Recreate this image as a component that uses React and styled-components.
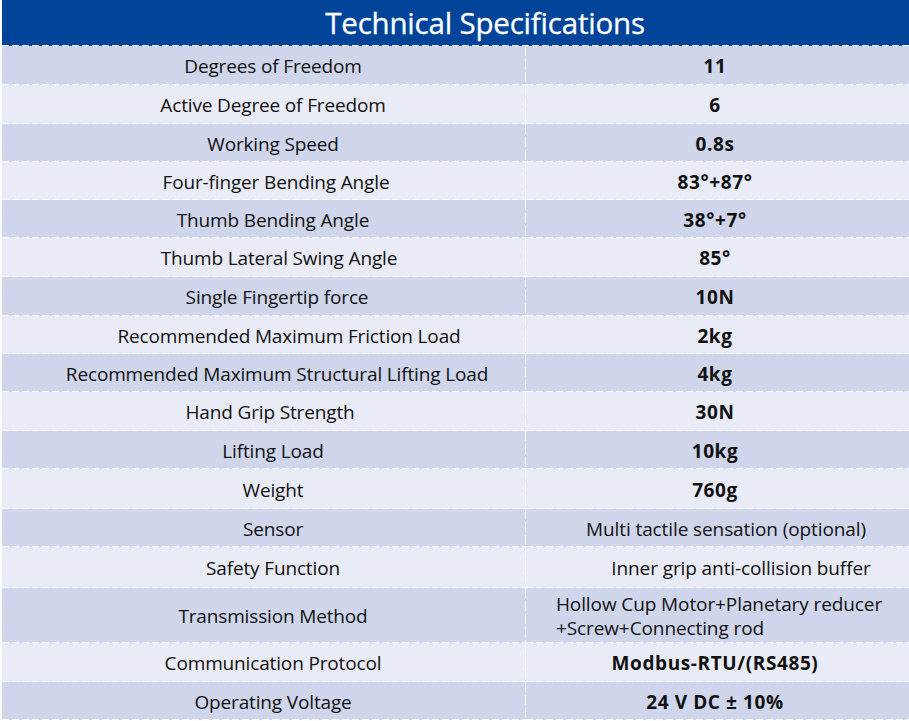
import React from 'react'
import styled, { createGlobalStyle } from 'styled-components'

const GlobalStyle = createGlobalStyle`
  html, body {
    margin: 0;
    padding: 0;
    background: #ffffff;
  }
  body {
    font-family: "Open Sans", "Noto Sans", sans-serif;
    color: #111111;
  }
`

// shift / labelShift = left padding; the source sheet isn't perfectly centred
const specs = [
  { label: 'Degrees of Freedom', value: '11', h: 39, bold: true },
  { label: 'Active Degree of Freedom', value: '6', h: 39, bold: true },
  { label: 'Working Speed', value: '0.8s', h: 38, bold: true },
  { label: 'Four-finger Bending Angle', value: '83°+87°', h: 38, bold: true, labelShift: 24 },
  { label: 'Thumb Bending Angle', value: '38°+7°', h: 38, bold: true },
  { label: 'Thumb Lateral Swing Angle', value: '85°', h: 39, bold: true, labelShift: 30 },
  { label: 'Single Fingertip force', value: '10N', h: 39, bold: true, labelShift: 26 },
  { label: 'Recommended Maximum Friction Load', value: '2kg', h: 38, bold: true, labelShift: 50 },
  { label: 'Recommended Maximum Structural Lifting Load', value: '4kg', h: 38, bold: true, labelShift: 26 },
  { label: 'Hand Grip Strength', value: '30N', h: 39, bold: true, labelShift: 12 },
  { label: 'Lifting Load', value: '10kg', h: 38, bold: true },
  { label: 'Weight', value: '760g', h: 40, bold: true },
  { label: 'Sensor', value: 'Multi tactile sensation (optional)', h: 38, shift: 16 },
  { label: 'Safety Function', value: 'Inner grip anti-collision buffer', h: 41, shift: 46 },
  {
    label: 'Transmission Method',
    value: ['Hollow Cup Motor+Planetary reducer', '+Screw+Connecting rod'],
    h: 55,
    shift: 2,
  },
  { label: 'Communication Protocol', value: 'Modbus-RTU/(RS485)', h: 39, bold: true },
  { label: 'Operating Voltage', value: '24 V DC ± 10%', h: 38, bold: true },
]

const dashX = 'repeating-linear-gradient(to right, #fafbff 0 7px, transparent 7px 10px)'
const dashY = 'repeating-linear-gradient(to bottom, #fafbff 0 10px, transparent 10px 13px)'

const Table = styled.div`
  width: 908px;
  margin-left: 1px;
  display: grid;
  grid-template-columns: 524px 1fr;
  background-image: ${dashY};
  background-size: 1px 100%;
  background-repeat: no-repeat;
  padding-left: 1px;
`

const Header = styled.div`
  grid-column: 1 / -1;
  height: 46px;
  box-sizing: border-box;
  padding-left: 58px;
  padding-bottom: 2px;
  background-color: #00449a;
  background-image: ${dashX};
  background-size: 100% 1px;
  background-position: bottom left;
  background-repeat: no-repeat;
  display: flex;
  align-items: center;
  justify-content: center;
  color: #ffffff;
  font-size: 29.5px;
  letter-spacing: -0.2px;
  -webkit-text-stroke: 0.3px #ffffff;
`

const Cell = styled.div`
  height: ${(p) => p.$h}px;
  box-sizing: border-box;
  padding-top: 3px;
  background-color: ${(p) => (p.$dark ? '#cfd5ea' : '#e9ebf6')};
  background-image: ${dashX};
  background-size: 100% 1px;
  background-position: bottom left;
  background-repeat: no-repeat;
  display: flex;
  align-items: center;
  justify-content: center;
  font-size: 19px;
  line-height: 1.22;
  white-space: nowrap;
`

const Label = styled(Cell)`
  padding-left: ${(p) => p.$shift || 18}px;
  letter-spacing: -0.15px;
  background-image: ${dashX}, ${dashY};
  background-size: 100% 1px, 1px 100%;
  background-position: bottom left, top right;
  background-repeat: no-repeat, no-repeat;
`

const Value = styled(Cell)`
  font-weight: ${(p) => (p.$bold ? 700 : 400)};
  letter-spacing: ${(p) => (p.$bold ? '0.6px' : '-0.1px')};
  padding-left: ${(p) => p.$shift || 0}px;
  padding-right: ${(p) => (p.$shift ? 0 : 6)}px;
`

const Lines = styled.div`
  display: flex;
  flex-direction: column;
  align-items: flex-start;
  line-height: 24px;
  padding-bottom: 2px;
`

export default function App() {
  return (
    <>
      <GlobalStyle />
      <Table>
        <Header>Technical Specifications</Header>
        {specs.map((row, i) => {
          const dark = i % 2 === 0
          return (
            <React.Fragment key={row.label}>
              <Label $h={row.h} $dark={dark} $shift={row.labelShift}>
                {row.label}
              </Label>
              <Value $h={row.h} $dark={dark} $bold={row.bold} $shift={row.shift}>
                {Array.isArray(row.value) ? (
                  <Lines>
                    {row.value.map((line) => (
                      <span key={line}>{line}</span>
                    ))}
                  </Lines>
                ) : (
                  row.value
                )}
              </Value>
            </React.Fragment>
          )
        })}
      </Table>
    </>
  )
}
